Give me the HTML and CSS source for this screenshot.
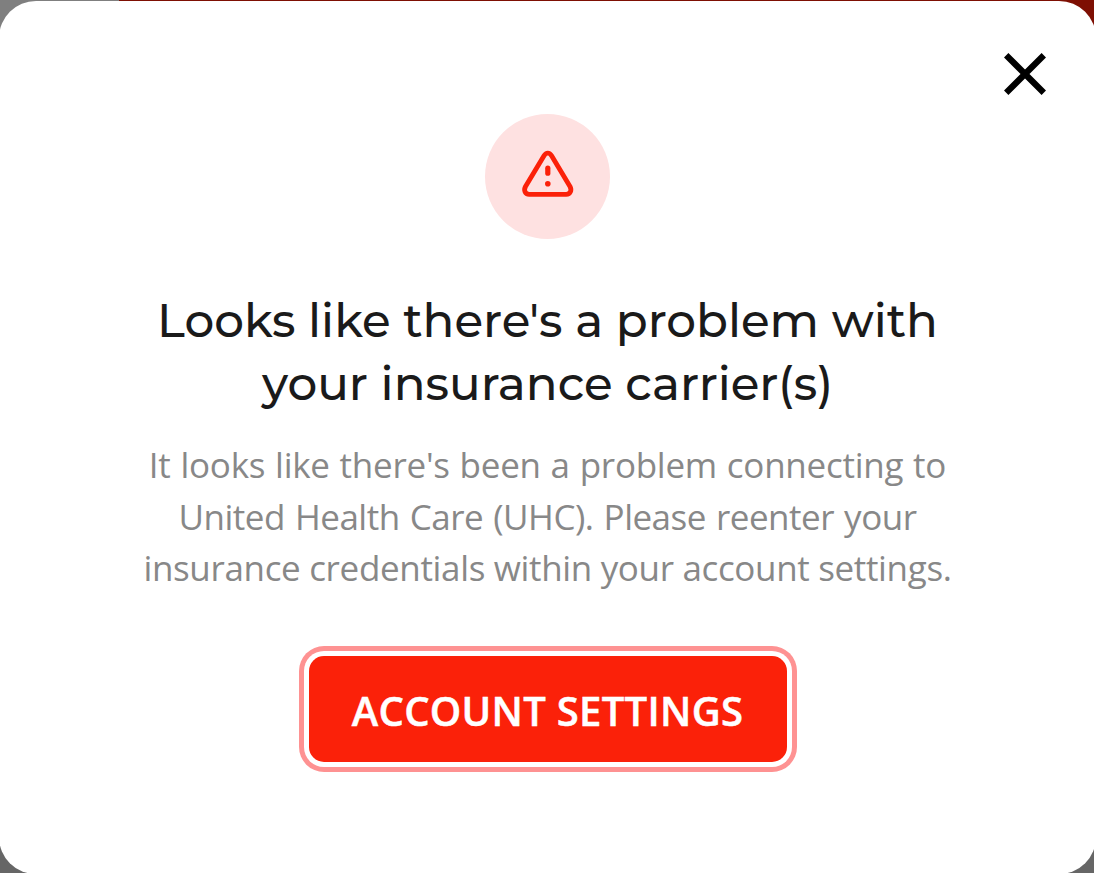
FILE: index.html
```html
<!DOCTYPE html>
<html lang="en">
<head>
    <meta charset="UTF-8">
    <title>Insurance carrier problem</title>
    <meta name="viewport" content="width=device-width, initial-scale=1.0">
    <link rel="stylesheet" href="styles.css">
</head>
<body>

<div class="modal" role="dialog" aria-labelledby="modalTitle">
    <div class="modal-header">
        <button class="close" aria-label="Close">
            <svg width="44" height="44" viewBox="0 0 44 44">
                <path d="M3.2 3.2L40.8 40.8M40.8 3.2L3.2 40.8" fill="none" stroke="#000" stroke-width="6.2"/>
            </svg>
        </button>
    </div>

    <div class="alert-icon">
        <svg width="63" height="63" viewBox="0 0 63 63">
            <path d="M28 10.8L9.5 41.5C7.5 45.2 9 49.3 13.2 49.3H50.2C54.4 49.3 56 45.2 54 41.5L35.6 10.8C33.5 7.3 30.1 7.3 28 10.8Z" fill="none" stroke="#fb2109" stroke-width="4.8" stroke-linejoin="round"/>
            <path d="M31.8 23.2V28.2" fill="none" stroke="#fb2109" stroke-width="5.2" stroke-linecap="round"/>
            <circle cx="31.8" cy="38.7" r="2.8" fill="#fb2109"/>
        </svg>
    </div>

    <h1 class="title" id="modalTitle">
        Looks like there's a problem with<br>
        your insurance carrier(s)
    </h1>

    <p class="message">
        <span class="message-top">It looks like there's been a problem connecting to</span><br>
        <span class="message-middle">United Health Care (UHC). Please reenter your</span><br>
        <span class="message-bottom">insurance credentials within your account settings.</span>
    </p>

    <button class="settings">ACCOUNT SETTINGS</button>
</div>

</body>
</html>
```
FILE: styles.css
```css
* {
    box-sizing: border-box;
}
body {
    margin: 0;
    height: 873px;
    overflow: hidden;
    display: flex;
    background: linear-gradient(#7f7f7f, #7f7f7f) 0 0 / 119px 60px no-repeat,
                linear-gradient(#7e0f03, #7e0f03) 0 0 / 100% 60px no-repeat,
                #666;
}
.modal {
    display: flex;
    flex-direction: column;
    align-items: center;
    flex: 1;
    height: 873px;
    margin: 1px -2px 0 -1px;
    padding: 51px 48px 0;
    background: #fff;
    border-radius: 37px;
}
.modal-header {
    display: flex;
    justify-content: flex-end;
    width: 100%;
    padding-right: 1px;
}
.close {
    display: flex;
    padding: 0;
    border: none;
    background: none;
    cursor: pointer;
}
.alert-icon {
    display: flex;
    justify-content: center;
    align-items: center;
    width: 125px;
    height: 125px;
    margin-top: 18px;
    border-radius: 50%;
    background: #fee1e1;
}
.title {
    margin: 51px 0 0;
    font-family: Montserrat, Inter, sans-serif;
    font-size: 46.8px;
    font-weight: 500;
    line-height: 62.5px;
    text-align: center;
    white-space: nowrap;
    color: #1a1a1a;
}
.message {
    margin: 24px 0 0;
    font-family: "Segoe UI", "Open Sans", sans-serif;
    font-size: 35px;
    line-height: 51.6px;
    text-align: center;
    white-space: nowrap;
    color: #888;
}
.message-top {
    letter-spacing: -0.25px;
    word-spacing: 1px;
}
.message-middle {
    letter-spacing: -0.5px;
    word-spacing: 1.5px;
}
.message-bottom {
    letter-spacing: -0.34px;
}
.settings {
    width: 478px;
    height: 106px;
    margin-top: 62px;
    padding: 4px 0 0;
    border: none;
    border-radius: 15px;
    background: #fb2109;
    box-shadow: 0 0 0 5px #fff, 0 0 0 10px #fe9292;
    color: #fff;
    font-family: "Segoe UI", "Open Sans", sans-serif;
    font-size: 40px;
    font-weight: 600;
    letter-spacing: 0.3px;
    -webkit-text-stroke: 0.5px #fff;
    cursor: pointer;
}
```
